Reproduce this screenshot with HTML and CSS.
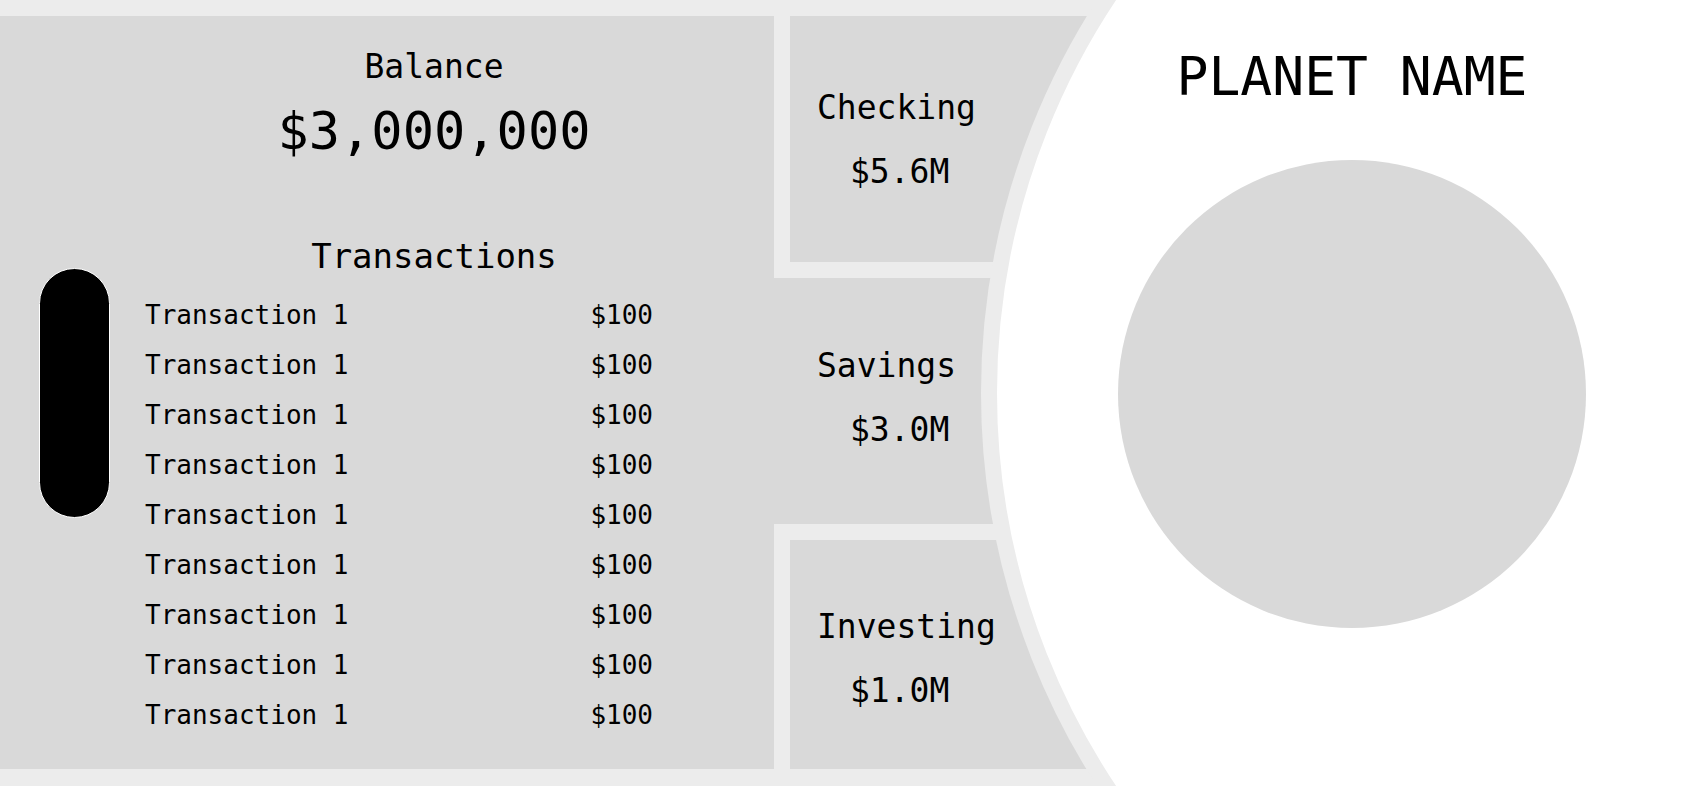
FILE: index.html
```html
<!DOCTYPE html>
<html lang="en">
  <head>
    <meta charset="UTF-8" />
    <meta name="viewport" content="width=device-width, initial-scale=1.0" />
    <title>Planet Bank</title>
    <link rel="stylesheet" href="styles.css">
  </head>
  <body>
    <div class="screen">
      <div class="ledger">
        <div class="track">
          <div class="thumb"></div>
        </div>
        <div class="summary">
          <div class="label">Balance</div>
          <div class="balance">$3,000,000</div>
          <div class="label transactions-title">Transactions</div>
          <ul class="transactions">
            <li><span>Transaction 1</span><span>$100</span></li>
            <li><span>Transaction 1</span><span>$100</span></li>
            <li><span>Transaction 1</span><span>$100</span></li>
            <li><span>Transaction 1</span><span>$100</span></li>
            <li><span>Transaction 1</span><span>$100</span></li>
            <li><span>Transaction 1</span><span>$100</span></li>
            <li><span>Transaction 1</span><span>$100</span></li>
            <li><span>Transaction 1</span><span>$100</span></li>
            <li><span>Transaction 1</span><span>$100</span></li>
          </ul>
        </div>
      </div>

      <div class="account checking">
        <div class="account-name">Checking</div>
        <div class="account-value">$5.6M</div>
      </div>
      <div class="account savings">
        <div class="account-name">Savings</div>
        <div class="account-value">$3.0M</div>
      </div>
      <div class="account investing">
        <div class="account-name">Investing</div>
        <div class="account-value">$1.0M</div>
      </div>

      <div class="arc"></div>

      <div class="planet">
        <h1>PLANET NAME</h1>
        <div class="globe"></div>
      </div>
    </div>
  </body>
</html>
```

FILE: styles.css
```css
html,
body {
  margin: 0;
  height: 786px;
  overflow: hidden;
}

body {
  background-color: #ececec;
  font-family: "DejaVu Sans Mono", "Liberation Mono", monospace;
  color: #000;
}

.screen {
  position: relative;
  display: grid;
  grid-template-columns: 774px 226px 120px 584px;
  grid-template-rows: 246px 246px 1fr;
  row-gap: 16px;
  height: 786px;
  box-sizing: border-box;
  padding: 16px 0 17px;
  overflow: hidden;
}

/* left panel */
.ledger {
  grid-column: 1;
  grid-row: 1 / 4;
  display: flex;
  background-color: #d9d9d9;
}

.track {
  width: 110px;
  box-sizing: border-box;
  padding: 252px 0 0 39px;
}

.thumb {
  width: 71px;
  height: 250px;
  box-sizing: border-box;
  background-color: #000;
  border: 1.5px solid #fff;
  border-radius: 36px;
}

.summary {
  flex: 1;
  padding: 31px 16px 0 0;
  text-align: center;
}

.label {
  font-size: 33px;
  line-height: 40px;
}

.balance {
  margin-top: 12px;
  font-size: 52px;
  line-height: 64px;
}

.transactions-title {
  margin-top: 73px;
  font-size: 34px;
}

.transactions {
  list-style: none;
  margin: 14px 0 0 35px;
  padding: 0;
  width: 508px;
  text-align: left;
}

.transactions li {
  display: flex;
  justify-content: space-between;
  font-size: 26px;
  line-height: 50px;
}

/* accounts */
.account {
  grid-column: 2 / 4;
  background-color: #d9d9d9;
  padding-top: 56px;
  font-size: 33px;
  line-height: 64px;
}

.checking {
  grid-row: 1;
  margin-left: 16px;
  padding-top: 60px;
  padding-left: 27px;
}

.savings {
  grid-row: 2;
  padding-left: 43px;
}

.investing {
  grid-row: 3;
  margin-left: 16px;
  padding-top: 55px;
  padding-left: 27px;
}

.account-value {
  padding-left: 33px;
}

/* planet side */
.arc {
  position: absolute;
  left: 981px;
  top: -330px;
  width: 1446px;
  height: 1446px;
  box-sizing: border-box;
  border: 16px solid #ececec;
  border-radius: 50%;
  background-color: #fff;
  z-index: 1;
}

.planet {
  grid-column: 3 / 5;
  grid-row: 1 / 4;
  position: relative;
  z-index: 2;
  display: flex;
  flex-direction: column;
  align-items: center;
  padding-top: 29px;
}

.planet h1 {
  margin: 0;
  font-size: 53px;
  font-weight: normal;
  line-height: 64px;
}

.globe {
  margin-top: 51px;
  width: 468px;
  height: 468px;
  border-radius: 50%;
  background-color: #d9d9d9;
}
```
